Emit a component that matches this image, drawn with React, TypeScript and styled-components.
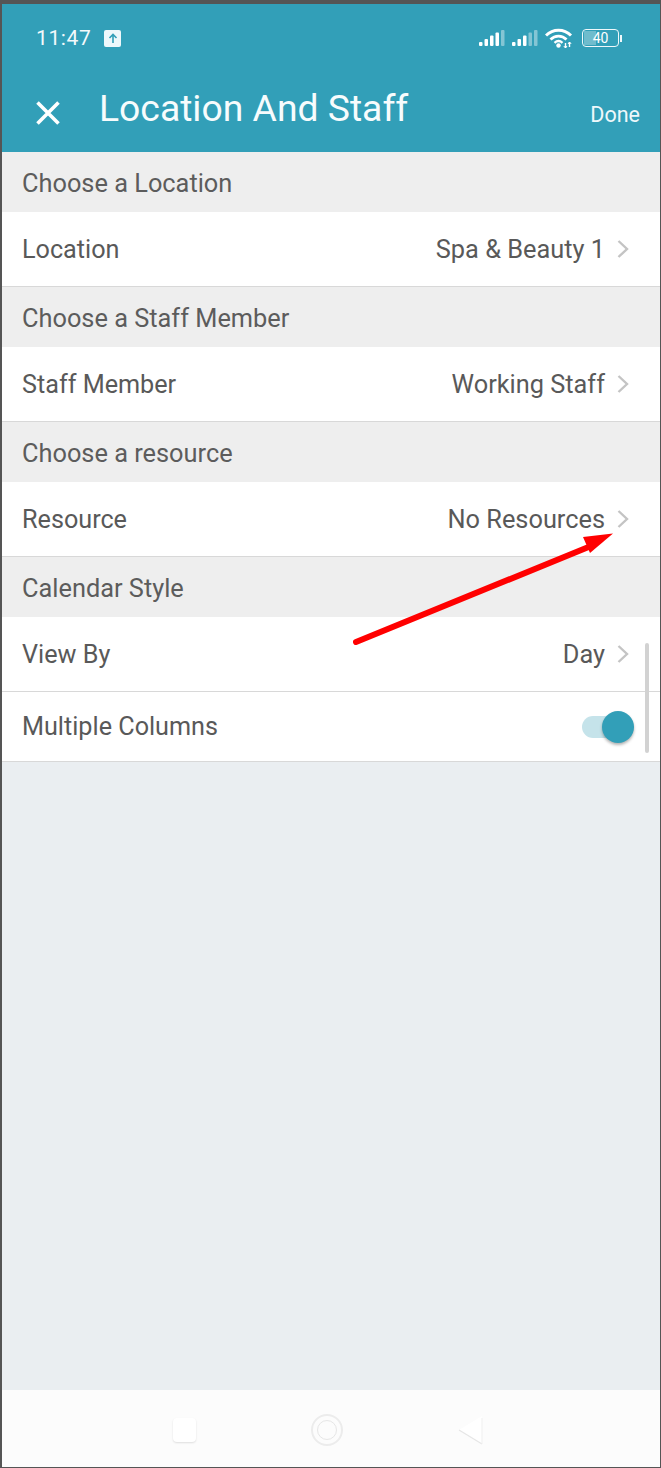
import React from "react";
import styled, { createGlobalStyle } from "styled-components";

const GlobalStyle = createGlobalStyle`
  html, body {
    margin: 0;
    padding: 0;
    background: #555;
  }
  * {
    box-sizing: border-box;
  }
`;

const TEAL = "#329fb8";

const sections = [
  { title: "Choose a Location", rows: [{ label: "Location", value: "Spa & Beauty 1" }] },
  { title: "Choose a Staff Member", rows: [{ label: "Staff Member", value: "Working Staff" }] },
  { title: "Choose a resource", rows: [{ label: "Resource", value: "No Resources" }] },
];

const Chevron = () => (
  <ChevronIcon width="12" height="20" viewBox="0 0 12 20">
    <path d="M1.5 2 L10 10 L1.5 18" fill="none" stroke="#c4c4c4" strokeWidth="2.4" />
  </ChevronIcon>
);

const SignalBars = () => (
  <svg width="27" height="18" viewBox="0 0 27 18">
    <rect x="0" y="13" width="3.5" height="4" rx="1" fill="#fff" />
    <rect x="5.5" y="10" width="3.5" height="7" rx="1" fill="#fff" />
    <rect x="11" y="6.5" width="3.5" height="10.5" rx="1" fill="#fff" />
    <rect x="16.5" y="3.5" width="3.5" height="13.5" rx="1" fill="#fff" />
    <rect x="22" y="1" width="3.5" height="16" rx="1" fill="#fff" fillOpacity="0.4" />
  </svg>
);

const SignalBarsWeak = () => (
  <svg width="27" height="18" viewBox="0 0 27 18">
    <rect x="0" y="13" width="3.5" height="4" rx="1" fill="#fff" />
    <rect x="5.5" y="10" width="3.5" height="7" rx="1" fill="#fff" />
    <rect x="11" y="6.5" width="3.5" height="10.5" rx="1" fill="#fff" />
    <rect x="16.5" y="3.5" width="3.5" height="13.5" rx="1" fill="#fff" fillOpacity="0.4" />
    <rect x="22" y="1" width="3.5" height="16" rx="1" fill="#fff" fillOpacity="0.4" />
  </svg>
);

const Wifi = () => (
  <svg width="28" height="20" viewBox="0 0 28 20">
    <path d="M1 7.5 C8 0.5 19 0.5 26 7.5" fill="none" stroke="#fff" strokeWidth="3" />
    <path d="M5.5 11.5 C10 7 17 7 21.5 11.5" fill="none" stroke="#fff" strokeWidth="2.8" />
    <path d="M9.5 14.8 C12 12.6 15 12.6 17.5 14.8" fill="none" stroke="#fff" strokeWidth="2.4" />
    <circle cx="13.5" cy="17.5" r="2.2" fill="#fff" />
    <path d="M20.5 15 V20 M24.5 14 V19" stroke="#fff" strokeWidth="1.4" />
    <path d="M18.8 18 L20.5 20 L22 18 M23 16 L24.5 14 L26.2 16" fill="none" stroke="#fff" strokeWidth="1" />
  </svg>
);

const Battery = () => (
  <BatteryWrap>
    <BatteryBody>
      <BatteryFill />
      <BatteryText>40</BatteryText>
    </BatteryBody>
    <BatteryCap />
  </BatteryWrap>
);

const App = () => {
  return (
    <Frame>
      <GlobalStyle />
      <Screen>
        <Header>
          <StatusBar>
            <StatusLeft>
              <Time>11:47</Time>
              <UploadBadge>
                <svg width="10" height="11" viewBox="0 0 10 11">
                  <path d="M5 10 V2 M1.5 5 L5 1.5 L8.5 5" fill="none" stroke={TEAL} strokeWidth="1.6" />
                </svg>
              </UploadBadge>
            </StatusLeft>
            <StatusRight>
              <SignalBars />
              <SignalBarsWeak />
              <Wifi />
              <Battery />
            </StatusRight>
          </StatusBar>
          <TitleBar>
            <CloseIcon width="26" height="26" viewBox="0 0 26 26">
              <path d="M2.5 2.5 L23.5 23.5 M23.5 2.5 L2.5 23.5" stroke="#fff" strokeWidth="3.6" />
            </CloseIcon>
            <Title>Location And Staff</Title>
            <Done>Done</Done>
          </TitleBar>
        </Header>

        <List>
          {sections.map((section) => (
            <React.Fragment key={section.title}>
              <SectionTitle>{section.title}</SectionTitle>
              {section.rows.map((row) => (
                <Row key={row.label}>
                  <Label>{row.label}</Label>
                  <Value>{row.value}</Value>
                  <Chevron />
                </Row>
              ))}
            </React.Fragment>
          ))}
          <SectionTitle>Calendar Style</SectionTitle>
          <Row>
            <Label>View By</Label>
            <Value>Day</Value>
            <Chevron />
          </Row>
          <Row $short>
            <Label>Multiple Columns</Label>
            <Toggle>
              <ToggleKnob />
            </Toggle>
          </Row>
          <ScrollThumb />
        </List>

        <Empty />

        <NavBar>
          <NavSquare />
          <NavCircle>
            <NavCircleInner />
          </NavCircle>
          <svg width="26" height="30" viewBox="0 0 26 30">
            <path d="M1 15 L24 1 V29 Z" fill="#fff" />
            <path d="M1 15 L24 29" stroke="#e6e6e6" strokeWidth="1.2" fill="none" />
            <path d="M24 29 V3" stroke="#efefef" strokeWidth="1" fill="none" />
          </svg>
        </NavBar>

        <Arrow width="270" height="120" viewBox="0 0 270 120">
          <path d="M3 110 L238 14" stroke="#ff0000" strokeWidth="6" strokeLinecap="round" fill="none" />
          <path d="M260 1.5 L230 5 L237 21 Z" fill="#ff0000" />
        </Arrow>
      </Screen>
    </Frame>
  );
};

const Frame = styled.div`
  width: 661px;
  height: 1468px;
  padding: 4px 1px 1px 2px;
  background: #555;
`;

const Screen = styled.div`
  position: relative;
  display: flex;
  flex-direction: column;
  width: 100%;
  height: 100%;
  background: #eaeef1;
  font-family: Roboto, "Liberation Sans", sans-serif;
  overflow: hidden;
`;

const Header = styled.header`
  flex: none;
  height: 148px;
  background: ${TEAL};
  color: #fff;
`;

const StatusBar = styled.div`
  display: flex;
  align-items: center;
  justify-content: space-between;
  height: 68px;
  padding: 0 38px 0 34px;
`;

const StatusLeft = styled.div`
  display: flex;
  align-items: center;
  gap: 13px;
`;

const Time = styled.span`
  font-size: 21px;
  font-weight: 400;
  letter-spacing: 0.6px;
  color: #f2f9fb;
`;

const UploadBadge = styled.span`
  display: flex;
  align-items: center;
  justify-content: center;
  width: 17px;
  height: 17px;
  border-radius: 2px;
  background: #eef8fb;
`;

const StatusRight = styled.div`
  display: flex;
  align-items: center;
  gap: 6px;
`;

const BatteryWrap = styled.div`
  display: flex;
  align-items: center;
  gap: 1px;
  margin-left: 3px;
`;

const BatteryBody = styled.div`
  position: relative;
  display: flex;
  align-items: center;
  justify-content: center;
  width: 37px;
  height: 18px;
  border: 1.5px solid #eef8fb;
  border-radius: 4px;
  overflow: hidden;
`;

const BatteryFill = styled.div`
  position: absolute;
  left: 1px;
  top: 1px;
  bottom: 1px;
  width: 12px;
  background: rgba(255, 255, 255, 0.3);
`;

const BatteryText = styled.span`
  position: relative;
  font-size: 14px;
  color: #fff;
`;

const BatteryCap = styled.div`
  width: 2px;
  height: 7px;
  background: #eef8fb;
`;

const TitleBar = styled.div`
  display: flex;
  align-items: center;
  height: 74px;
  padding: 0 20px 0 33px;
`;

const CloseIcon = styled.svg`
  flex: none;
  margin-top: 8px;
`;

const Title = styled.h1`
  flex: 1;
  margin: 0 0 2px 38px;
  font-size: 37.3px;
  font-weight: 400;
  color: #f7fcfd;
`;

const Done = styled.span`
  margin-top: 11px;
  font-size: 21.5px;
  color: #eef8fb;
`;

const List = styled.div`
  position: relative;
  flex: none;
  display: flex;
  flex-direction: column;
`;

const SectionTitle = styled.div`
  display: flex;
  align-items: center;
  height: 60px;
  padding: 2px 0 0 20px;
  background: #eeeeee;
  font-size: 25.35px;
  color: #5c5c5c;
`;

const Row = styled.div<{ $short?: boolean }>`
  display: flex;
  align-items: center;
  height: ${(p) => (p.$short ? "70px" : "75px")};
  padding: 0 31px 0 20px;
  background: #fff;
  border-bottom: 1px solid #d8d8d8;
`;

const Label = styled.span`
  flex: 1;
  font-size: 25.2px;
  color: #595959;
`;

const Value = styled.span`
  font-size: 25.35px;
  color: #595959;
`;

const ChevronIcon = styled.svg`
  flex: none;
  margin-left: 12px;
`;

const Toggle = styled.div`
  position: relative;
  width: 44px;
  height: 22px;
  margin-right: 3px;
  border-radius: 11px;
  background: #c5e3ea;
`;

const ToggleKnob = styled.div`
  position: absolute;
  right: -8px;
  top: -5px;
  width: 32px;
  height: 32px;
  border-radius: 50%;
  background: ${TEAL};
  box-shadow: 0 2px 3px rgba(0, 0, 0, 0.3);
`;

const ScrollThumb = styled.div`
  position: absolute;
  right: 11px;
  bottom: 9px;
  width: 4px;
  height: 110px;
  border-radius: 2px;
  background: #d2d2d2;
`;

const Empty = styled.div`
  flex: 1;
  background: #eaeef1;
`;

const NavBar = styled.nav`
  flex: none;
  display: flex;
  align-items: center;
  justify-content: center;
  gap: 115px;
  height: 77px;
  padding: 2px 5px 0 0;
  background: #fcfcfc;
`;

const NavSquare = styled.div`
  width: 23px;
  height: 24px;
  border-radius: 4px;
  background: #fff;
  box-shadow: 0 1px 2px rgba(0, 0, 0, 0.12);
`;

const NavCircle = styled.div`
  display: flex;
  align-items: center;
  justify-content: center;
  width: 32px;
  height: 32px;
  border-radius: 50%;
  border: 2px solid #ececec;
`;

const NavCircleInner = styled.div`
  width: 20px;
  height: 20px;
  border-radius: 50%;
  border: 1.5px solid #e6e6e6;
`;

const Arrow = styled.svg`
  position: absolute;
  left: 351px;
  top: 528px;
`;

export default App;
